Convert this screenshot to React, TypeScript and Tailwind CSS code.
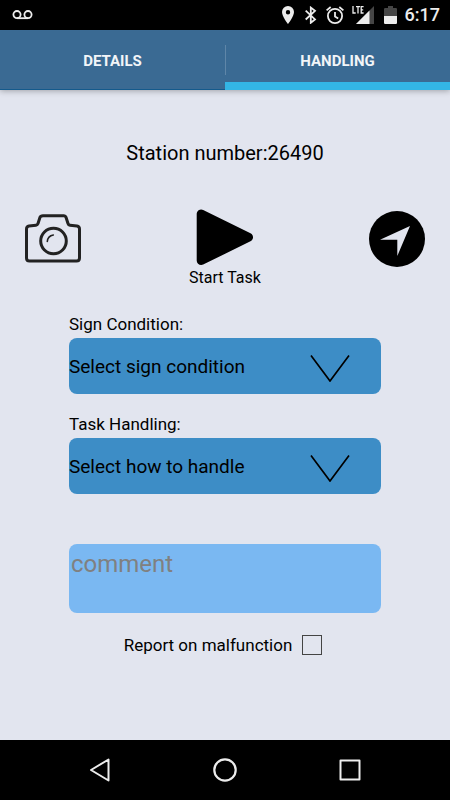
import { useState } from 'react';

const tabs = ['DETAILS', 'HANDLING'];

const selects = [
  {
    id: 'sign-condition',
    label: 'Sign Condition:',
    placeholder: 'Select sign condition',
    options: ['Good', 'Damaged', 'Missing'],
  },
  {
    id: 'task-handling',
    label: 'Task Handling:',
    placeholder: 'Select how to handle',
    options: ['Repair', 'Replace', 'Remove'],
  },
];

const StatusBar = () => {
  return (
    <div className="flex h-[30px] items-center justify-between bg-black pl-3 pr-[10px] text-[#ececec]">
      <svg className="h-[10px] w-[21px]" viewBox="0 0 21 10" fill="none" stroke="currentColor" strokeWidth="1.8">
        <circle cx="5" cy="4.6" r="3.6" />
        <circle cx="16" cy="4.6" r="3.6" />
        <path d="M5 8.2h11" />
      </svg>
      <div className="flex items-center">
        <svg className="h-[18px] w-3" viewBox="0 0 12 18" fill="currentColor">
          <path fillRule="evenodd" d="M6 0a6 6 0 0 0-6 6c0 4.5 6 12 6 12s6-7.5 6-12a6 6 0 0 0-6-6Zm0 4a2.2 2.2 0 1 1 0 4.4A2.2 2.2 0 0 1 6 4Z" />
        </svg>
        <svg className="ml-[11px] h-[18px] w-3" viewBox="0 0 12 18" fill="none" stroke="currentColor" strokeWidth="1.8">
          <path d="M.7 4.7 10 13.4 5.8 16.8V1.6L10 4.9.7 13.5" />
        </svg>
        <svg className="ml-[9px] h-[18px] w-[18px]" viewBox="0 0 18 18" fill="none" stroke="currentColor" strokeWidth="1.8">
          <circle cx="9" cy="10" r="7.1" />
          <path d="M9 6v4.5l3.2 2M.6 4.4 4.7 1M17.4 4.4 13.3 1" />
        </svg>
        <svg className="ml-2 h-[18px] w-[22px]" viewBox="0 0 22 18">
          <path d="M22 0v18H4z" fill="#454545" />
          <path d="M0 0h13v9H0z" fill="#000" />
          <path d="M17.5 4.5V18H4z" fill="currentColor" />
          <path d="M1 0v7h2.7M4 .7h4M6 .7V7.6M11.6 .7H9.2V7h2.4M9.2 3.8h2" fill="none" stroke="currentColor" strokeWidth="1.3" />
        </svg>
        <svg className="ml-[10px] h-[18px] w-[13px]" viewBox="0 0 13 18">
          <path d="M4 0h5v2h3.2l.8.8V10H0V2.8L.8 2H4z" fill="#454545" />
          <path d="M0 10h13v7.2l-.8.8H.8l-.8-.8z" fill="currentColor" />
        </svg>
        <span className="ml-2 text-[18px] font-medium leading-8">6:17</span>
      </div>
    </div>
  );
};

const App = () => {
  const [activeTab, setActiveTab] = useState('HANDLING');

  return (
    <div className="flex min-h-screen flex-col bg-[#e2e5ef] font-[Roboto,sans-serif] text-black">
      <StatusBar />

      <nav className="relative grid h-[60px] grid-cols-2 bg-[#3a6a93] shadow-[0_1px_6px_rgba(0,0,0,0.3)]">
        {tabs.map((tab) => (
          <button
            key={tab}
            type="button"
            onClick={() => setActiveTab(tab)}
            className={`flex flex-col text-[15px] font-bold text-[#f2f5f8] ${
              tab === activeTab ? 'border-b-8 border-[#33b5e5] pt-[10px]' : 'border-b border-[#145a8c] pt-[3px]'
            }`}
          >
            <span className="flex w-full flex-1 items-center justify-center">{tab}</span>
          </button>
        ))}
        <span className="absolute left-1/2 top-[15px] h-[30px] w-px bg-[#5f86a8]" />
      </nav>

      <main className="flex flex-1 flex-col pb-20 pt-[51px]">
        <h1 className="text-center text-[20px] leading-6">Station number:26490</h1>

        <div className="mt-11 flex items-start justify-between px-[25px]">
          <button type="button" aria-label="Take photo">
            <svg className="h-[58px] w-[57px]" viewBox="0 0 57 58" fill="none" stroke="#222" strokeWidth="3" strokeLinejoin="round" strokeLinecap="round">
              <path d="M18 6.7h21q1.5 0 2 1.5l2 6.3q.5 1.5 2 1.7l7 .9q2.5.4 2.5 3V49q0 3-3 3h-47q-3 0-3-3V20.1q0-2.6 2.5-3l7-.9q1.5-.2 2-1.7l2-6.3q.5-1.5 3-1.5Z" />
              <circle cx="28.5" cy="32" r="12.8" />
              <path d="M22.3 32.5q.5-5.5 6-6.5" strokeWidth="1.6" />
            </svg>
          </button>
          <button type="button" className="flex flex-col items-center">
            <svg className="h-[58px] w-[57px] overflow-visible" viewBox="0 0 57 58">
              <path d="M4.200 5v46.500L51.500 28.300z" stroke="#000" strokeWidth="9" strokeLinejoin="round" />
            </svg>
            <span className="text-[16px] leading-[22px]">Start Task</span>
          </button>
          <button type="button" aria-label="Navigate">
            <svg className="h-[58px] w-[57px]" viewBox="0 0 57 58">
              <circle cx="29" cy="30" r="28" />
              <path d="M42 17 29.3 47V30.700H12z" fill="#e2e5ef" />
            </svg>
          </button>
        </div>

        <form className="mt-[25px] flex flex-col px-[69px]">
          <div className="flex flex-col gap-5">
            {selects.map((item) => (
              <div key={item.id} className="flex flex-col gap-1">
                <label htmlFor={item.id} className="text-[17px] leading-5">
                  {item.label}
                </label>
                <div className="relative">
                  <select
                    id={item.id}
                    defaultValue=""
                    className="block h-14 w-full appearance-none rounded-lg bg-[#3d8dc6] pt-[2px] text-[19px]"
                  >
                    <option value="">{item.placeholder}</option>
                    {item.options.map((option) => (
                      <option key={option}>{option}</option>
                    ))}
                  </select>
                  <svg className="pointer-events-none absolute right-[31px] top-4 h-7 w-10" viewBox="0 0 40 28" fill="none" stroke="#000" strokeWidth="1.7">
                    <path d="M1 1.5 20 27 39 1.5" />
                  </svg>
                </div>
              </div>
            ))}
          </div>

          <textarea
            aria-label="Comment"
            placeholder="comment"
            className="mt-[50px] h-[69px] w-full resize-none rounded-lg bg-[#7ab8f2] px-[2px] py-[6px] text-[24px] leading-7 placeholder:text-[#808080]"
          />

          <label className="mt-[22px] flex items-center justify-center gap-[10px] pr-1 text-[17px] leading-5">
            Report on malfunction
            <input type="checkbox" className="size-5 appearance-none border border-[#444] checked:bg-[#3d8dc6]" />
          </label>
        </form>
      </main>

      <footer className="flex h-[60px] items-center justify-center gap-[101px] bg-black text-[#ececec]">
        <button type="button" aria-label="Back">
          <svg className="size-6" viewBox="0 0 24 24" fill="none" stroke="currentColor" strokeWidth="2" strokeLinejoin="round">
            <path d="M20.5 1.5v21L3 12z" />
          </svg>
        </button>
        <button type="button" aria-label="Home">
          <svg className="size-6" viewBox="0 0 24 24" fill="none" stroke="currentColor" strokeWidth="2.2">
            <circle cx="12" cy="12" r="10.7" />
          </svg>
        </button>
        <button type="button" aria-label="Recent apps">
          <svg className="size-6" viewBox="0 0 24 24" fill="none" stroke="currentColor" strokeWidth="2" strokeLinejoin="round">
            <path d="M2.5 2.5h19v19h-19z" />
          </svg>
        </button>
      </footer>
    </div>
  );
};

export default App;
